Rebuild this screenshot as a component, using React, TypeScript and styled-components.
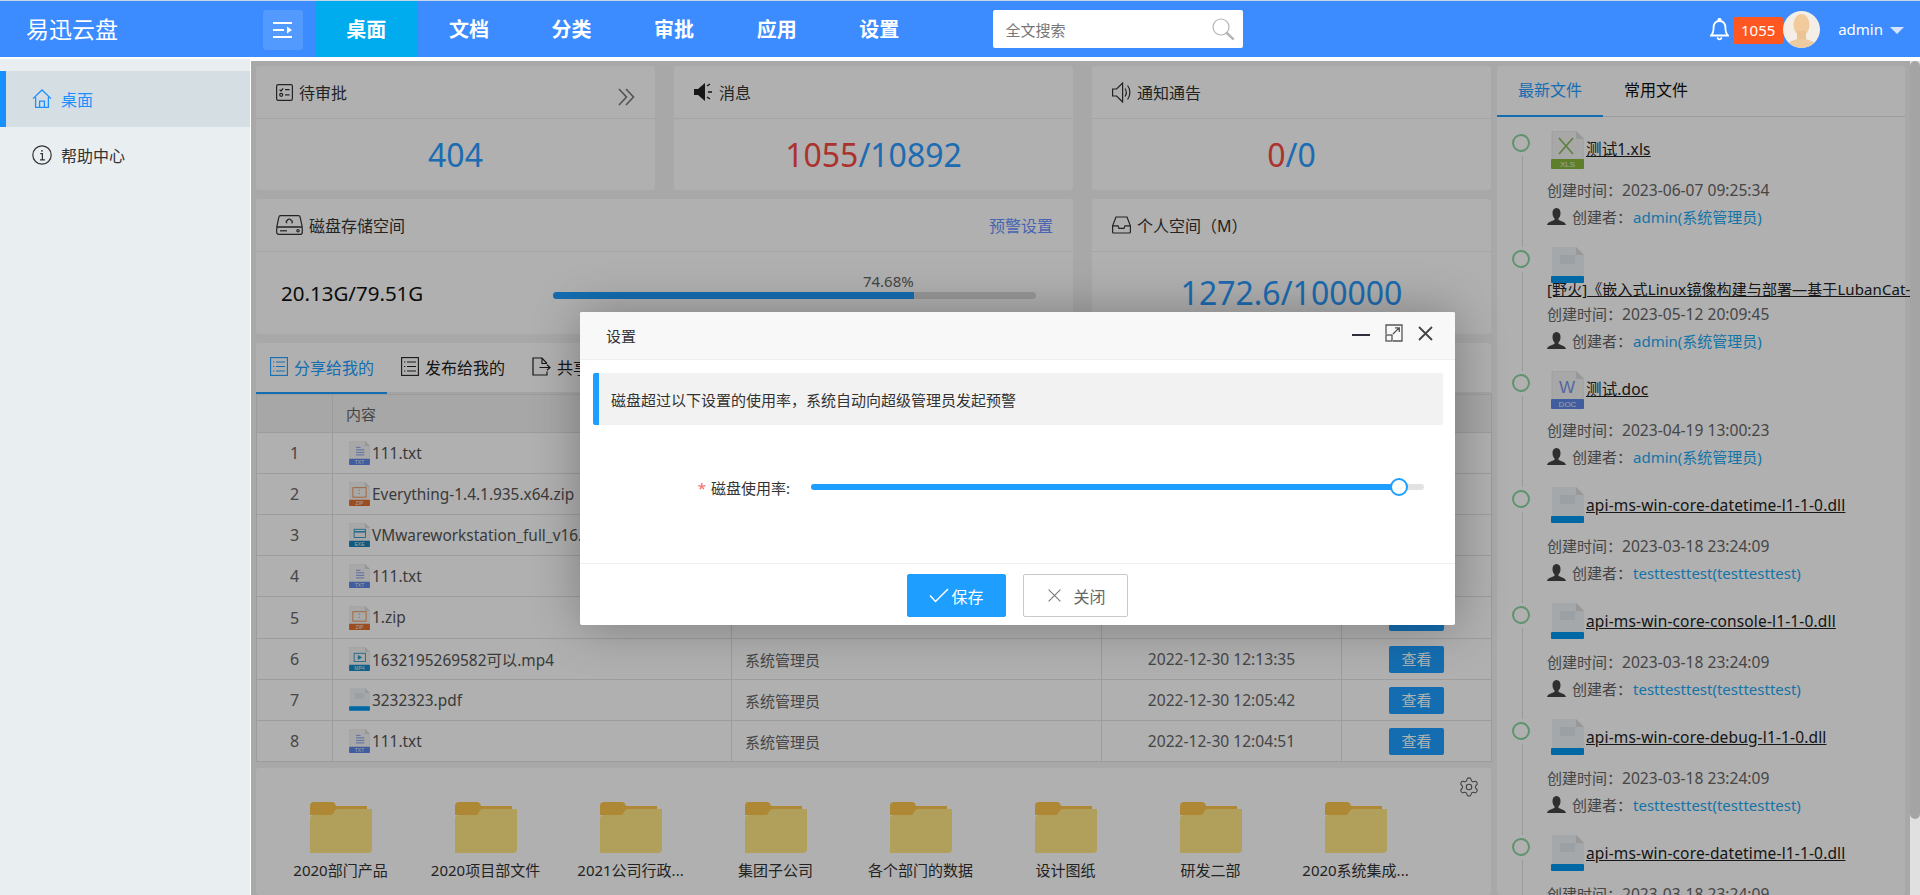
import React from "react";
import styled, { createGlobalStyle } from "styled-components";
import { Settings } from "lucide-react";

const FONT = '"Noto Sans", "Noto Sans CJK SC", sans-serif';

const GlobalStyle = createGlobalStyle`
  html, body {
    margin: 0;
    padding: 0;
    overflow: hidden;
    background: #fff;
    font-family: ${FONT};
  }
  * { box-sizing: border-box; }
`;

const Page = styled.div`
  height: 100vh;
  display: flex;
  flex-direction: column;
  overflow: hidden;
`;

/* top bar */
const Header = styled.header`
  height: 57px;
  flex: none;
  display: flex;
  background: #3c8cff;
  border-top: 1px solid #c9d6e6;
  color: #fff;
`;

const Logo = styled.div`
  width: 263px;
  padding-left: 26px;
  font-size: 23px;
  line-height: 56px;
`;

const MenuButton = styled.div`
  width: 40px;
  height: 40px;
  margin: 9px 12px 0 0;
  border-radius: 3px;
  background: rgba(255, 255, 255, 0.12);
  display: flex;
  align-items: center;
  justify-content: center;
`;

const Nav = styled.nav`
  display: flex;
`;

const NavItem = styled.div<{ $active?: boolean }>`
  width: 102.6px;
  padding-top: 2px;
  text-align: center;
  font-size: 20px;
  font-weight: 700;
  line-height: 54px;
  background: ${(p) => (p.$active ? "#00acee" : "transparent")};
`;

const SearchBox = styled.div`
  width: 250px;
  height: 38px;
  margin: 9px 0 0 62px;
  padding: 0 8px 0 13px;
  background: #fff;
  border-radius: 2px;
  display: flex;
  align-items: center;
  justify-content: space-between;
  color: #777;
  font-size: 15px;
`;

const UserArea = styled.div`
  margin-left: auto;
  padding-right: 16px;
  display: flex;
  align-items: center;
`;

const Badge = styled.span`
  width: 50px;
  height: 27px;
  margin: 3px 0 0 4px;
  border-radius: 2px;
  background: #ff5722;
  font-size: 15px;
  line-height: 27px;
  text-align: center;
`;

const UserName = styled.span`
  margin-left: 18px;
  font-size: 15px;
`;

const Caret = styled.i`
  margin: 2px 0 0 7px;
  border-style: solid;
  border-width: 7px 7px 0;
  border-color: #d5e5ff transparent transparent;
`;

/* body */
const Body = styled.div`
  flex: 1;
  min-height: 0;
  display: flex;
  margin-top: 2px;
`;

const Sidebar = styled.aside`
  width: 250px;
  flex: none;
  padding-top: 12px;
  background: #e9eef1;
`;

const SideItem = styled.div<{ $active?: boolean }>`
  height: 56px;
  padding-left: 26px;
  display: flex;
  align-items: center;
  gap: 9px;
  font-size: 16px;
  border-left: 6px solid ${(p) => (p.$active ? "#1890ff" : "transparent")};
  background: ${(p) => (p.$active ? "#d5dfe3" : "transparent")};
  color: ${(p) => (p.$active ? "#1e8fff" : "#333")};
`;

const Content = styled.main`
  flex: 1;
  min-width: 0;
  margin: 2px 0 0 1px;
  display: flex;
`;

const Stage = styled.div`
  position: relative;
  width: 1659px;
  flex: none;
  overflow: hidden;
  background: #f3f3f3;
`;

const Mask = styled.div`
  position: absolute;
  inset: 0;
  background: rgba(0, 0, 0, 0.31);
`;

const Dash = styled.div`
  height: 100%;
  padding: 5px 0 0 5px;
  display: flex;
  gap: 6px;
`;

const LeftColumn = styled.div`
  width: 1235px;
  flex: none;
  display: flex;
  flex-direction: column;
`;

const CardRow = styled.div<{ $columns: string; $height: number }>`
  display: grid;
  grid-template-columns: ${(p) => p.$columns};
  gap: 19px;
  height: ${(p) => p.$height}px;
  margin-bottom: 9px;
`;

const Card = styled.section`
  background: #fff;
  border-radius: 3px;
  display: flex;
  flex-direction: column;
`;

const CardHead = styled.div`
  height: 53px;
  flex: none;
  padding: 0 20px;
  display: flex;
  align-items: center;
  gap: 6px;
  font-size: 16px;
  color: #333;
  border-bottom: 1px solid #f0f0f0;
`;

const HeadAction = styled.span`
  margin-left: auto;
  color: #6793ff;
`;

const ChevronSlot = styled.span`
  margin: 10px 0 0 auto;
  display: flex;
`;

const CardBody = styled.div`
  flex: 1;
  display: flex;
  align-items: center;
  justify-content: center;
`;

const BigNumber = styled.span<{ $red?: boolean }>`
  font-size: 32px;
  line-height: 40px;
  color: ${(p) => (p.$red ? "#fa4a42" : "#2a9bff")};
`;

const DiskBody = styled.div`
  flex: 1;
  padding: 0 37px 0 25px;
  display: flex;
  align-items: center;
  justify-content: space-between;
`;

const DiskSize = styled.span`
  font-size: 20.5px;
  color: #111;
`;

const Meter = styled.div`
  width: 483px;
  margin-bottom: 16px;
`;

const MeterLabel = styled.div<{ $percent: number }>`
  width: ${(p) => p.$percent}%;
  text-align: right;
  font-size: 15px;
  line-height: 20px;
  color: #666;
`;

const MeterTrack = styled.div`
  height: 7px;
  margin-top: 1px;
  border-radius: 4px;
  background: #dcdcdc;
  overflow: hidden;
`;

const MeterFill = styled.div<{ $percent: number }>`
  width: ${(p) => p.$percent}%;
  height: 100%;
  background: #1e9fff;
`;

/* shared with me */
const TabCard = styled(Card)`
  margin-bottom: 6px;
`;

const TabBar = styled.div`
  height: 51px;
  display: flex;
  box-shadow: inset 0 -2px 0 #eee;
`;

const Tab = styled.div<{ $active?: boolean }>`
  height: 51px;
  padding: 0 13px 2px 14px;
  display: flex;
  align-items: center;
  gap: 6px;
  font-size: 16px;
  white-space: nowrap;
  color: ${(p) => (p.$active ? "#1e9fff" : "#222")};
  border-bottom: 2px solid ${(p) => (p.$active ? "#1e9fff" : "transparent")};
`;

const Table = styled.table`
  width: 1235px;
  table-layout: fixed;
  border-collapse: collapse;
  font-size: 15px;
  color: #666;

  th, td {
    border: 1px solid #e2e2e2;
    padding: 0 13px;
    text-align: left;
    font-weight: 400;
    white-space: nowrap;
    overflow: hidden;
  }

  th {
    height: 38px;
    background: #f2f2f2;
  }

  td {
    height: 41px;
  }

  tr:nth-child(5) td {
    height: 42px;
  }
`;

const IndexCell = styled.td`
  && {
    text-align: center;
    font-size: 16px;
    padding: 0;
  }
`;

const FileCell = styled.div`
  display: flex;
  align-items: center;
  gap: 2px;
  margin-left: 3px;
  font-size: 15.4px;
  color: #555;
`;

const TimeCell = styled.td`
  && {
    text-align: center;
    padding: 0;
    font-size: 15.6px;
  }
`;

const ActionCell = styled.td`
  && {
    text-align: center;
    padding: 0;
  }
`;

const ViewButton = styled.span`
  display: inline-block;
  width: 55px;
  height: 27px;
  border-radius: 2px;
  background: #1e9fff;
  color: #fff;
  font-size: 15px;
  line-height: 27px;
  text-align: center;
  vertical-align: middle;
`;

/* folders */
const FolderCard = styled(Card)`
  flex: 1;
  padding: 8px 11px 0 12px;
`;

const GearRow = styled.div`
  height: 26px;
  display: flex;
  justify-content: flex-end;
  color: #5f5f5f;
`;

const FolderGrid = styled.div`
  display: grid;
  grid-template-columns: repeat(8, 145px);
`;

const Folder = styled.div`
  display: flex;
  flex-direction: column;
  align-items: center;
  gap: 6px;
  font-size: 15px;
  line-height: 22px;
  color: #333;
`;

/* latest files */
const RightPanel = styled.section`
  width: 408px;
  flex: none;
  background: #fff;
  border-radius: 3px;
`;

const RightTabs = styled.div`
  height: 51px;
  display: flex;
  box-shadow: inset 0 -1px 0 #e2e2e2;
`;

const RightTab = styled.div<{ $active?: boolean }>`
  height: 51px;
  padding: 0 21px 4px;
  display: flex;
  align-items: center;
  font-size: 16px;
  color: ${(p) => (p.$active ? "#1e9fff" : "#111")};
  border-bottom: 2px solid ${(p) => (p.$active ? "#1e9fff" : "transparent")};
`;

const Timeline = styled.div`
  padding: 14px 0 0 14px;
`;

const TimelineItem = styled.div`
  display: flex;
`;

const Axis = styled.div`
  width: 20px;
  flex: none;
  padding-top: 3px;
  display: flex;
  flex-direction: column;
  align-items: center;
`;

const Dot = styled.i`
  width: 18px;
  height: 18px;
  flex: none;
  border: 2px solid #8bd6a0;
  border-radius: 50%;
`;

const AxisLine = styled.i`
  flex: 1;
  width: 1px;
  margin: 4px 0 0 2px;
  background: #e0e0e0;
`;

const ItemBody = styled.div`
  width: 358px;
  margin-left: 16px;
  padding-bottom: 18px;
`;

const FileHead = styled.div`
  min-height: 46px;
  display: flex;
  flex-wrap: wrap;
  align-items: flex-start;
  align-content: flex-start;
  color: #222;
`;

const HeadIcon = styled.span`
  margin-left: 4px;
  height: 38px;
  flex: none;
`;

const FileName = styled.span<{ $wrapped?: boolean }>`
  flex: none;
  margin-left: ${(p) => (p.$wrapped ? "0" : "2px")};
  margin-top: ${(p) => (p.$wrapped ? "-8px" : "-1px")};
  font-size: ${(p) => (p.$wrapped ? "15px" : "15.5px")};
  letter-spacing: ${(p) => (p.$wrapped ? "0.1px" : "0.15px")};
  line-height: ${(p) => (p.$wrapped ? "24px" : "38px")};
  white-space: nowrap;
  text-decoration: underline;
`;

const MetaLine = styled.div`
  height: 26px;
  display: flex;
  align-items: center;
  gap: 6px;
  font-size: 15px;
  color: #666;
  white-space: nowrap;
`;

const MetaTime = styled.span`
  font-size: 15.6px;
`;

const CreatorLink = styled.span`
  margin-left: 1px;
  color: #1da9f2;
`;

const Scrollbar = styled.div`
  width: 10px;
  flex: none;
  background: #e0e0e0;
`;

const ScrollThumb = styled.div`
  height: 758px;
  border-radius: 5px;
  background: #a4a4a4;
`;

/* settings dialog */
const Modal = styled.div`
  position: absolute;
  left: 329px;
  top: 251px;
  width: 875px;
  height: 313px;
  display: flex;
  flex-direction: column;
  background: #fff;
  border-radius: 2px;
  box-shadow: 1px 1px 50px rgba(0, 0, 0, 0.3);
`;

const ModalTitle = styled.div`
  height: 48px;
  flex: none;
  padding: 0 22px 0 26px;
  display: flex;
  align-items: center;
  justify-content: space-between;
  background: #f8f8f8;
  border-bottom: 1px solid #eee;
  border-radius: 2px 2px 0 0;
  font-size: 15px;
  color: #333;
`;

const ModalControls = styled.div`
  display: flex;
  align-items: center;
  gap: 15px;
  margin-bottom: 5px;
`;

const ModalBody = styled.div`
  flex: 1;
  padding: 13px 12px 0 13px;
`;

const Notice = styled.div`
  height: 52px;
  padding-left: 12px;
  display: flex;
  align-items: center;
  background: #f2f2f2;
  border-left: 6px solid #1e9fff;
  border-radius: 2px;
  font-size: 15px;
  color: #333;
`;

const FormRow = styled.div`
  height: 28px;
  margin-top: 48px;
  padding-right: 19px;
  display: flex;
  align-items: center;
`;

const FormLabel = styled.label`
  width: 197px;
  flex: none;
  text-align: right;
  font-size: 15px;
  color: #333;
`;

const Required = styled.span`
  margin-right: 5px;
  color: #f56c6c;
`;

const SliderTrack = styled.div`
  position: relative;
  flex: 1;
  height: 6px;
  margin-left: 21px;
  border-radius: 3px;
  background: #e2e2e2;
`;

const SliderFill = styled.div<{ $percent: number }>`
  width: ${(p) => p.$percent}%;
  height: 100%;
  border-radius: 3px;
  background: #1e9fff;
`;

const SliderThumb = styled.i<{ $percent: number }>`
  position: absolute;
  left: ${(p) => p.$percent}%;
  top: 50%;
  width: 18px;
  height: 18px;
  transform: translate(-50%, -50%);
  border: 2px solid #1e9fff;
  border-radius: 50%;
  background: #fff;
`;

const ModalFooter = styled.div`
  height: 62px;
  flex: none;
  padding-top: 10px;
  display: flex;
  justify-content: center;
  align-items: flex-start;
  gap: 17px;
  border-top: 1px solid #f0f0f0;
`;

const DialogButton = styled.button<{ $primary?: boolean }>`
  width: ${(p) => (p.$primary ? "99px" : "105px")};
  height: 43px;
  padding: ${(p) => (p.$primary ? "0" : "0 0 0 3px")};
  display: flex;
  align-items: center;
  justify-content: center;
  gap: ${(p) => (p.$primary ? "2px" : "12px")};
  font-family: ${FONT};
  font-size: 16px;
  border-radius: 2px;
  border: 1px solid ${(p) => (p.$primary ? "#1e9fff" : "#c9c9c9")};
  background: ${(p) => (p.$primary ? "#1e9fff" : "#fff")};
  color: ${(p) => (p.$primary ? "#fff" : "#666")};
`;

/* drawings */
const MenuIcon = () => (
  <svg width="20" height="16" viewBox="0 0 20 16" fill="#fff">
    <rect x="0" y="0" width="19" height="2" />
    <rect x="0" y="7" width="11" height="2" />
    <path d="M14 4.5 19 8l-5 3.5z" />
    <rect x="0" y="14" width="19" height="2" />
  </svg>
);

const SearchIcon = () => (
  <svg width="23" height="22" viewBox="0 0 23 22" fill="none" stroke="#b4b4b4">
    <circle cx="9" cy="9" r="8" strokeWidth="1.2" />
    <path d="M14.8 15 21 20.8" strokeWidth="2.4" strokeLinecap="round" />
  </svg>
);

const BellIcon = () => (
  <svg width="19" height="23" viewBox="0 0 19 23" fill="none" stroke="#fff" strokeWidth="1.8">
    <circle cx="9.5" cy="2" r="1.2" fill="#fff" />
    <path d="M9.5 3C5.5 3 3.6 6 3.6 9.5c0 3.4-.6 6.1-2.6 8h17c-2-1.9-2.6-4.6-2.6-8C15.4 6 13.5 3 9.5 3z" />
    <path d="M7.6 20c.5 1.7 3.3 1.7 3.8 0" strokeLinecap="round" />
  </svg>
);

const Avatar = () => (
  <svg width="37" height="37" viewBox="0 0 37 37">
    <clipPath id="avatar-clip">
      <circle cx="18.5" cy="18.5" r="18.5" />
    </clipPath>
    <g clipPath="url(#avatar-clip)">
      <rect width="37" height="37" fill="#f4eee6" />
      <ellipse cx="18.5" cy="14" rx="8" ry="11" fill="#f2cb9c" />
      <rect x="14" y="20" width="9" height="10" fill="#eec393" />
      <ellipse cx="18.5" cy="36" rx="15" ry="8" fill="#eecaa0" />
    </g>
  </svg>
);

const HomeIcon = () => (
  <svg width="20" height="20" viewBox="0 0 20 20" fill="none" stroke="#1e8fff" strokeWidth="1.3">
    <path d="M1 9.6 10 1l9 8.6" />
    <path d="M3.6 8v10.4h12.8V8" />
    <path d="M7.6 18.4v-6.2h4.8v6.2" />
  </svg>
);

const InfoIcon = () => (
  <svg width="20" height="20" viewBox="0 0 20 20" fill="none" stroke="#333" strokeWidth="1.2">
    <circle cx="10" cy="10" r="9.2" />
    <path d="M8.3 8.6H10.4V14.6M8 14.8h5" />
    <circle cx="10" cy="5.8" r=".9" fill="#333" stroke="none" />
  </svg>
);

const ChecklistIcon = () => (
  <svg width="17" height="17" viewBox="0 0 17 17" fill="none" stroke="#333" strokeWidth="1.2">
    <rect x=".6" y=".6" width="15.8" height="15.8" rx="1.6" />
    <path d="M3.6 5.6 5 7l2.2-2.6M9 5.6h4.6M9 10.8h4.6" />
    <circle cx="5.2" cy="10.8" r="1.5" />
  </svg>
);

const SpeakerFilledIcon = () => (
  <svg width="19" height="18" viewBox="0 0 19 18" fill="#222">
    <path d="M0 6h4l7-6v18l-7-6H0z" />
    <path d="M13 3l3-2M14 9h4M13 14l3 2" stroke="#222" strokeWidth="1.4" />
  </svg>
);

const SpeakerIcon = () => (
  <svg width="19" height="21" viewBox="0 0 19 21" fill="none" stroke="#333" strokeWidth="1.2">
    <path d="M.6 7h4l6-6v19l-6-6h-4z" />
    <path d="M13 6.5c1.6 2.4 1.6 5.6 0 8M15.6 3.5c3 4 3 10 0 14" />
  </svg>
);

const DiskIcon = () => (
  <svg width="27" height="20" viewBox="0 0 27 20" fill="none" stroke="#333" strokeWidth="1.2">
    <path d="M4.6.7h17.8c1 0 1.6.6 1.8 1.6l2 9.7H.8l2-9.7C3 1.3 3.6.7 4.6.7z" />
    <rect x=".7" y="12" width="25.6" height="7.3" rx="2" />
    <path d="M4 15.8h7" />
    <circle cx="22" cy="15.7" r="1.2" />
    <path d="M11.3 8c-1.600 0-1.600-2.300 0-2.400.3-2 3.500-2 4 0 1.500.2 1.400 2.400 0 2.400" />
  </svg>
);

const InboxIcon = () => (
  <svg width="19" height="18" viewBox="0 0 19 18" fill="none" stroke="#333" strokeWidth="1.2">
    <path d="M4 1h11l3.4 8.8v6.2a1 1 0 0 1-1 1H1.6a1 1 0 0 1-1-1V9.8z" />
    <path d="M.6 9.8H6l1 2.6h5l1-2.6h5.4" />
  </svg>
);

const DoubleChevron = () => (
  <svg width="17" height="18" viewBox="0 0 17 18" fill="none" stroke="#777" strokeWidth="1.6">
    <path d="M1 1l7.5 8L1 17M8 1l7.5 8L8 17" />
  </svg>
);

const ListIcon = ({ color }: { color: string }) => (
  <svg width="18" height="19" viewBox="0 0 18 19" fill="none" stroke={color} strokeWidth="1.1">
    <rect x=".6" y=".6" width="16.8" height="17.8" />
    <path d="M3 5h1.3M6 5h9M3 9.5h1.3M6 9.5h9M3 14h1.3M6 14h9" />
  </svg>
);

const ExportIcon = () => (
  <svg width="19" height="19" viewBox="0 0 19 19" fill="none" stroke="#222" strokeWidth="1.2">
    <path d="M15 6.5 10 1H1v17h14v-3.5" />
    <path d="M10 1v5.5h5M7.5 10.5H18M15 7.8l3 2.7-3 2.7" />
  </svg>
);

const UserIcon = () => (
  <svg width="19" height="17" viewBox="0 0 19 17" fill="#444">
    <path d="M9.5 0c2.8 0 4 2.2 4 5s-1 4.5-2 5.5V12c2 1 7 1.8 7.5 5H0c.5-3.2 5.5-4 7.5-5v-1.500c-1-1-2-2.700-2-5.500s1.200-5 4-5z" />
  </svg>
);

const MinimizeIcon = () => (
  <svg width="18" height="18" viewBox="0 0 18 18">
    <rect x="0" y="10" width="18" height="2" fill="#2f2f3a" />
  </svg>
);

const MaximizeIcon = () => (
  <svg width="18" height="18" viewBox="0 0 18 18" fill="none" stroke="#555" strokeWidth="1.3">
    <path d="M6 1H17V17H8" />
    <rect x="1" y="11" width="6" height="6" />
    <path d="M1 10V1h5M8 10l6-6M10 3.8h4.3V8" />
  </svg>
);

const CloseIcon = () => (
  <svg width="15" height="15" viewBox="0 0 15 15" stroke="#444" strokeWidth="1.8">
    <path d="M1 1l13 13M14 1 1 14" />
  </svg>
);

const CheckIcon = () => (
  <svg width="20" height="15" viewBox="0 0 20 15" fill="none" stroke="#fff" strokeWidth="1.5">
    <path d="M1 7.5l5.5 6L19 1" />
  </svg>
);

const ThinCloseIcon = () => (
  <svg width="13" height="13" viewBox="0 0 13 13" stroke="#777" strokeWidth="1.1">
    <path d="M.6.6l11.8 11.8M12.4.6.6 12.4" />
  </svg>
);

const FolderIcon = () => (
  <svg width="62" height="51" viewBox="0 0 62 51">
    <path d="M0 4a4 4 0 0 1 4-4h18c2 0 3 1 4 4h31v9H0z" fill="#fcc64c" />
    <path d="M0 17q0-4 4-4h17q1.5 0 2.5-2l1.500-2.500Q26 7 28 7h34v40a4 4 0 0 1-4 4H0z" fill="#ffe885" />
  </svg>
);

const BandText = styled.text`
  font-family: "Liberation Sans", sans-serif;
  font-size: 8px;
  text-anchor: middle;
  fill: #e8e8e8;
`;

const GlyphLetter = styled.text`
  font-family: "Liberation Sans", sans-serif;
  font-size: 17px;
  text-anchor: middle;
  fill: #7795ea;
`;

type FileKind = "txt" | "zip" | "exe" | "mp4" | "xls" | "doc" | "blank";

const bandColor: Record<FileKind, string> = {
  txt: "#5c87e6",
  zip: "#e2702c",
  exe: "#1582b8",
  mp4: "#1a8cc9",
  xls: "#87b83c",
  doc: "#5d87e6",
  blank: "#0098f0",
};

const FileGlyph = ({ kind }: { kind: FileKind }) => {
  if (kind === "txt")
    return (
      <path d="M11 10h7M11 14h13M11 18h13M11 22h13" stroke="#7795ea" strokeWidth="1.4" />
    );
  if (kind === "zip")
    return (
      <g fill="none" stroke="#ea8a4c" strokeWidth="1.4">
        <rect x="6" y="9" width="21" height="15" />
        <path d="M16 12v2M16 17v2" />
      </g>
    );
  if (kind === "exe")
    return (
      <g fill="none" stroke="#2a96c8" strokeWidth="1.4">
        <rect x="8" y="10" width="18" height="13" />
        <path d="M8 14h18" strokeWidth="2.4" />
      </g>
    );
  if (kind === "mp4")
    return (
      <g fill="none" stroke="#2a96c8" strokeWidth="1.4">
        <rect x="8" y="10" width="18" height="13" />
        <path d="M14.5 13.5l5 3-5 3z" fill="#2a96c8" />
      </g>
    );
  if (kind === "xls")
    return <path d="M8 7l14 16M22 7 8 23" stroke="#8fbd63" strokeWidth="1.8" />;
  if (kind === "doc") return <GlyphLetter x="16" y="22">W</GlyphLetter>;
  return <rect x="9" y="8" width="15" height="9" fill="#dfe8ee" />;
};

const FileIcon = ({ kind, small }: { kind: FileKind; small?: boolean }) => {
  const blank = kind === "blank";
  const bottom = blank ? 36 : 38;
  const top = blank ? 29 : 28;
  const label = blank ? "" : kind.toUpperCase();
  return (
    <svg
      width={small ? 21 : 33}
      height={small ? 24 : 38}
      viewBox="0 0 33 38"
      style={{ flex: "none", display: "block" }}
    >
      <path
        d={`M1 0h24l8 8v${bottom - 8}H1z`}
        fill={blank ? "#eef3f6" : "#f3f3f3"}
        stroke={blank ? "none" : "#dedede"}
        strokeWidth=".6"
      />
      <path d="M25 0v8h8z" fill="#dcdcdc" />
      <FileGlyph kind={kind} />
      <rect x="0" y={top} width="33" height={bottom - top} rx="1" fill={bandColor[kind]} />
      {label && (
        <BandText x="16.5" y="36">
          {label}
        </BandText>
      )}
    </svg>
  );
};

/* data */
const navItems = ["桌面", "文档", "分类", "审批", "应用", "设置"];

const rows: { kind: FileKind; name: string; time?: string }[] = [
  { kind: "txt", name: "111.txt" },
  { kind: "zip", name: "Everything-1.4.1.935.x64.zip" },
  { kind: "exe", name: "VMwareworkstation_full_v16." },
  { kind: "txt", name: "111.txt" },
  { kind: "zip", name: "1.zip" },
  { kind: "mp4", name: "1632195269582可以.mp4", time: "2022-12-30 12:13:35" },
  { kind: "blank", name: "3232323.pdf", time: "2022-12-30 12:05:42" },
  { kind: "txt", name: "111.txt", time: "2022-12-30 12:04:51" },
];

const folders = [
  "2020部门产品",
  "2020项目部文件",
  "2021公司行政...",
  "集团子公司",
  "各个部门的数据",
  "设计图纸",
  "研发二部",
  "2020系统集成...",
];

const admin = "admin(系统管理员)";
const tester = "testtesttest(testtesttest)";

const latest: {
  kind: FileKind;
  name: string;
  time: string;
  owner: string;
  wrapped?: boolean;
}[] = [
  { kind: "xls", name: "测试1.xls", time: "2023-06-07 09:25:34", owner: admin },
  {
    kind: "blank",
    name: "[野火]《嵌入式Linux镜像构建与部署—基于LubanCat-",
    time: "2023-05-12 20:09:45",
    owner: admin,
    wrapped: true,
  },
  { kind: "doc", name: "测试.doc", time: "2023-04-19 13:00:23", owner: admin },
  { kind: "blank", name: "api-ms-win-core-datetime-l1-1-0.dll", time: "2023-03-18 23:24:09", owner: tester },
  { kind: "blank", name: "api-ms-win-core-console-l1-1-0.dll", time: "2023-03-18 23:24:09", owner: tester },
  { kind: "blank", name: "api-ms-win-core-debug-l1-1-0.dll", time: "2023-03-18 23:24:09", owner: tester },
  { kind: "blank", name: "api-ms-win-core-datetime-l1-1-0.dll", time: "2023-03-18 23:24:09", owner: tester },
];

const App = () => (
  <Page>
    <GlobalStyle />
    <Header>
      <Logo>易迅云盘</Logo>
      <MenuButton>
        <MenuIcon />
      </MenuButton>
      <Nav>
        {navItems.map((item, i) => (
          <NavItem key={item} $active={i === 0}>
            {item}
          </NavItem>
        ))}
      </Nav>
      <SearchBox>
        全文搜索
        <SearchIcon />
      </SearchBox>
      <UserArea>
        <BellIcon />
        <Badge>1055</Badge>
        <Avatar />
        <UserName>admin</UserName>
        <Caret />
      </UserArea>
    </Header>
    <Body>
      <Sidebar>
        <SideItem $active>
          <HomeIcon />
          桌面
        </SideItem>
        <SideItem>
          <InfoIcon />
          帮助中心
        </SideItem>
      </Sidebar>
      <Content>
        <Stage>
          <Dash>
            <LeftColumn>
              <CardRow $columns="399px 399px 399px" $height={124}>
                <Card>
                  <CardHead>
                    <ChecklistIcon />
                    待审批
                    <ChevronSlot>
                      <DoubleChevron />
                    </ChevronSlot>
                  </CardHead>
                  <CardBody>
                    <BigNumber>404</BigNumber>
                  </CardBody>
                </Card>
                <Card>
                  <CardHead>
                    <SpeakerFilledIcon />
                    消息
                  </CardHead>
                  <CardBody>
                    <BigNumber $red>1055</BigNumber>
                    <BigNumber>/10892</BigNumber>
                  </CardBody>
                </Card>
                <Card>
                  <CardHead>
                    <SpeakerIcon />
                    通知通告
                  </CardHead>
                  <CardBody>
                    <BigNumber $red>0</BigNumber>
                    <BigNumber>/0</BigNumber>
                  </CardBody>
                </Card>
              </CardRow>
              <CardRow $columns="817px 399px" $height={135}>
                <Card>
                  <CardHead>
                    <DiskIcon />
                    磁盘存储空间
                    <HeadAction>预警设置</HeadAction>
                  </CardHead>
                  <DiskBody>
                    <DiskSize>20.13G/79.51G</DiskSize>
                    <Meter>
                      <MeterLabel $percent={74.68}>74.68%</MeterLabel>
                      <MeterTrack>
                        <MeterFill $percent={74.68} />
                      </MeterTrack>
                    </Meter>
                  </DiskBody>
                </Card>
                <Card>
                  <CardHead>
                    <InboxIcon />
                    个人空间（M）
                  </CardHead>
                  <CardBody>
                    <BigNumber>1272.6/100000</BigNumber>
                  </CardBody>
                </Card>
              </CardRow>
              <TabCard>
                <TabBar>
                  <Tab $active>
                    <ListIcon color="#1e9fff" />
                    分享给我的
                  </Tab>
                  <Tab>
                    <ListIcon color="#222" />
                    发布给我的
                  </Tab>
                  <Tab>
                    <ExportIcon />
                    共享
                  </Tab>
                </TabBar>
                <Table>
                  <colgroup>
                    <col width="76" />
                    <col width="399" />
                    <col width="370" />
                    <col width="240" />
                    <col width="150" />
                  </colgroup>
                  <thead>
                    <tr>
                      <th />
                      <th>内容</th>
                      <th />
                      <th />
                      <th />
                    </tr>
                  </thead>
                  <tbody>
                    {rows.map((row, i) => (
                      <tr key={i}>
                        <IndexCell>{i + 1}</IndexCell>
                        <td>
                          <FileCell>
                            <FileIcon kind={row.kind} small />
                            {row.name}
                          </FileCell>
                        </td>
                        <td>{row.time && "系统管理员"}</td>
                        <TimeCell>{row.time}</TimeCell>
                        <ActionCell>
                          <ViewButton>查看</ViewButton>
                        </ActionCell>
                      </tr>
                    ))}
                  </tbody>
                </Table>
              </TabCard>
              <FolderCard>
                <GearRow>
                  <Settings size={22} strokeWidth={1.2} />
                </GearRow>
                <FolderGrid>
                  {folders.map((name) => (
                    <Folder key={name}>
                      <FolderIcon />
                      {name}
                    </Folder>
                  ))}
                </FolderGrid>
              </FolderCard>
            </LeftColumn>
            <RightPanel>
              <RightTabs>
                <RightTab $active>最新文件</RightTab>
                <RightTab>常用文件</RightTab>
              </RightTabs>
              <Timeline>
                {latest.map((file, i) => (
                  <TimelineItem key={i}>
                    <Axis>
                      <Dot />
                      <AxisLine />
                    </Axis>
                    <ItemBody>
                      <FileHead>
                        <HeadIcon>
                          <FileIcon kind={file.kind} />
                        </HeadIcon>
                        <FileName $wrapped={file.wrapped}>{file.name}</FileName>
                      </FileHead>
                      <MetaLine>
                        <span>
                          创建时间：<MetaTime>{file.time}</MetaTime>
                        </span>
                      </MetaLine>
                      <MetaLine>
                        <UserIcon />
                        <span>
                          创建者：<CreatorLink>{file.owner}</CreatorLink>
                        </span>
                      </MetaLine>
                    </ItemBody>
                  </TimelineItem>
                ))}
              </Timeline>
            </RightPanel>
          </Dash>
          <Mask />
          <Modal>
            <ModalTitle>
              设置
              <ModalControls>
                <MinimizeIcon />
                <MaximizeIcon />
                <CloseIcon />
              </ModalControls>
            </ModalTitle>
            <ModalBody>
              <Notice>磁盘超过以下设置的使用率，系统自动向超级管理员发起预警</Notice>
              <FormRow>
                <FormLabel>
                  <Required>*</Required>磁盘使用率:
                </FormLabel>
                <SliderTrack>
                  <SliderFill $percent={96} />
                  <SliderThumb $percent={96} />
                </SliderTrack>
              </FormRow>
            </ModalBody>
            <ModalFooter>
              <DialogButton $primary>
                <CheckIcon />
                保存
              </DialogButton>
              <DialogButton>
                <ThinCloseIcon />
                关闭
              </DialogButton>
            </ModalFooter>
          </Modal>
        </Stage>
        <Scrollbar>
          <ScrollThumb />
        </Scrollbar>
      </Content>
    </Body>
  </Page>
);

export default App;
